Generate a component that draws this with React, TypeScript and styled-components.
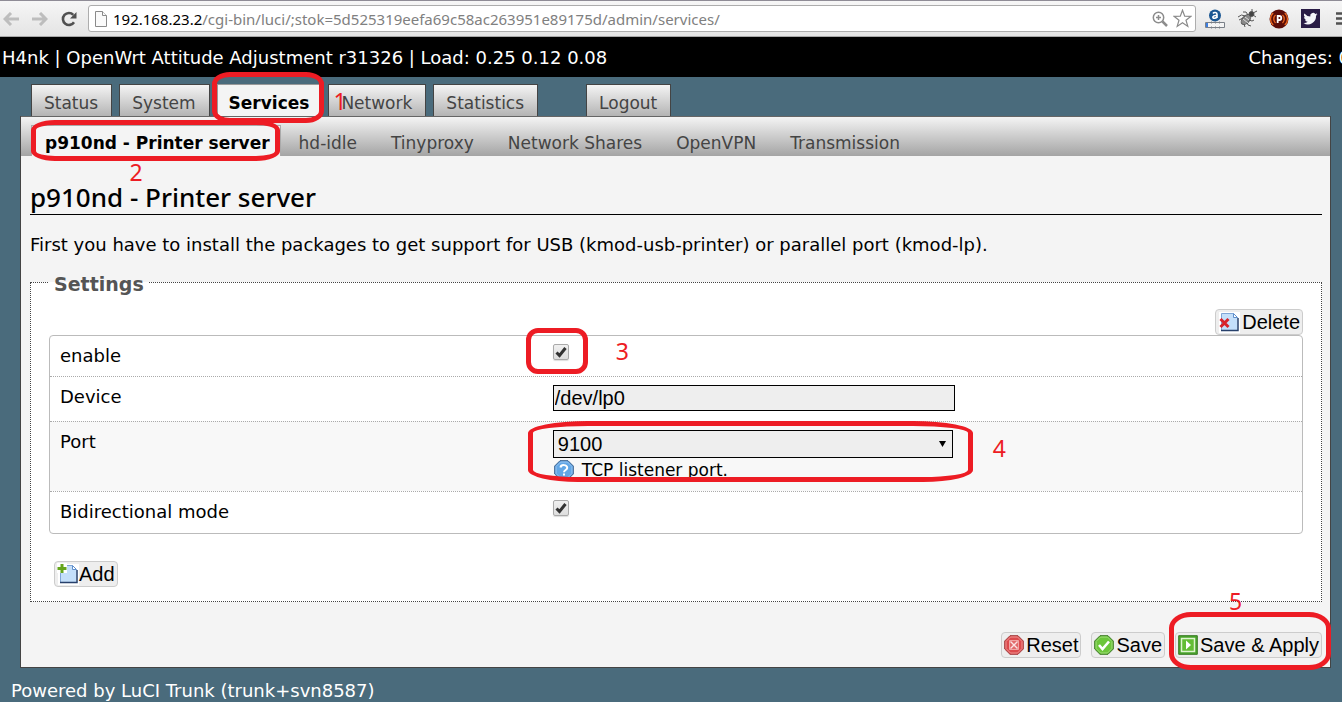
import React from "react";
import styled, { createGlobalStyle, css } from "styled-components";

const ui = `"DejaVu Sans", Verdana, sans-serif`;
const control = `"Liberation Sans", Arial, sans-serif`;
const chrome = `"Noto Sans", "Segoe UI", sans-serif`;
const red = "#ed1c24";

const GlobalStyle = createGlobalStyle`
  *, *::before, *::after { box-sizing: border-box; }
  html, body { margin: 0; min-height: 100%; background: #4a6b7c; overflow-x: hidden; }
  body { font: 17px/20px ${ui}; color: #000; }
  svg { flex: none; }
`;

const Browser = styled.div`
  display: flex;
  align-items: center;
  height: 37px;
  padding-left: 1px;
  background: linear-gradient(#f6f6f6, #e4e4e4);
  border-top: 1px solid #8f8c96;
  border-bottom: 1px solid #a8a8a8;
  overflow: hidden;
`;

const ToolButton = styled.button`
  display: flex;
  flex: none;
  align-items: center;
  justify-content: center;
  width: 20px;
  height: 20px;
  margin: 0 9px 0 0;
  padding: 0;
  border: 0;
  background: none;
`;

const Address = styled.div`
  display: flex;
  flex: 1;
  align-items: center;
  gap: 5px;
  min-width: 0;
  height: 27px;
  padding: 0 3px 0 6px;
  background: #fff;
  border: 1px solid #adadad;
  border-radius: 3px;
`;

const Url = styled.span`
  flex: 1;
  padding-left: 1px;
  font: 15px/20px ${chrome};
  color: #808080;
  white-space: nowrap;
  overflow: hidden;
`;

const Host = styled.span`
  color: #000;
`;

const Extensions = styled.div`
  display: flex;
  flex: none;
  align-items: center;
  gap: 12px;
  width: 146px;
  padding-left: 9px;
  overflow: hidden;
`;

const Header = styled.header`
  display: flex;
  justify-content: space-between;
  align-items: center;
  height: 40px;
  padding: 2px 0 0 2px;
  background: #000;
  color: #fff;
  font-size: 18px;
  white-space: nowrap;
  overflow: hidden;
`;

const Changes = styled.span`
  flex: none;
  margin-right: -8px;
`;

const Tabs = styled.nav`
  display: flex;
  gap: 7px;
  padding: 7px 31px 0;
`;

const tabLabel = css`
  color: #444;
  text-decoration: none;
  white-space: nowrap;
`;

const Tab = styled.a<{ $active?: boolean; $apart?: boolean }>`
  ${tabLabel}
  position: relative;
  height: 32px;
  margin-left: ${(p) => (p.$apart ? "41px" : "0")};
  padding: 8px 13px 0 12px;
  border: 1px solid #444;
  border-bottom: 0;
  background: linear-gradient(#f4f4f4, #b4b4b4);
  ${(p) =>
    p.$active &&
    css`
      padding: 8px 11px 0;
      background: #f4f4f4;
      color: #000;
      font-weight: bold;
      border-color: #999;
    `}
`;

const Panel = styled.main`
  margin: 0 11px 0 20px;
  background: #f4f4f4;
  border: 1px solid #444;
  border-top: 0;
`;

const SubTabs = styled.nav`
  display: flex;
  align-items: flex-end;
  gap: 2px;
  height: 40px;
  padding-left: 10px;
  border-top: 1px solid #666;
  background: linear-gradient(#f4f4f4, #a4a4a4);
`;

const SubTab = styled.a<{ $active?: boolean }>`
  ${tabLabel}
  position: relative;
  height: 31px;
  padding: 8px 16px 0;
  ${(p) =>
    p.$active &&
    css`
      padding: 7px 10px 0 13px;
      background: #f4f4f4;
      border: 1px solid #aaa;
      border-bottom: 0;
      color: #000;
      font-weight: bold;
    `}
`;

const Content = styled.form`
  margin: 0;
  padding: 26px 8px 9px 9px;
`;

const Title = styled.h1`
  margin: 0;
  padding-bottom: 2px;
  border-bottom: 1px solid #000;
  font: 500 26px/30px "Noto Sans", "Trebuchet MS", sans-serif;
`;

const Intro = styled.p`
  margin: 20px 0 14px;
  font-size: 18px;
`;

const Settings = styled.fieldset`
  min-width: 0;
  margin: 0;
  padding: 14px 18px 14px;
  border: 1px dotted #444;
  background: #fff;
`;

const Legend = styled.legend`
  padding: 4px 5px 0;
  font-size: 19px;
  line-height: 22px;
  font-weight: bold;
  color: #555;
`;

const Actions = styled.div<{ $end?: boolean; $top?: number }>`
  display: flex;
  gap: 10px;
  margin-top: ${(p) => p.$top ?? 0}px;
  justify-content: ${(p) => (p.$end ? "flex-end" : "flex-start")};
`;

const Button = styled.button`
  position: relative;
  display: flex;
  align-items: center;
  gap: 2px;
  height: 26px;
  padding: 0 2px;
  border: 1px solid #ccc;
  border-radius: 4px;
  background: #eee;
  font: 20px/24px ${control};
  color: #000;
  white-space: nowrap;
`;

const AddButton = styled(Button)`
  gap: 0;
  margin-left: 5px;
`;

const Rows = styled.div`
  border: 1px solid #bbb;
  border-radius: 4px;
`;

const Row = styled.div<{ $height: number; $shaded?: boolean }>`
  display: grid;
  grid-template-columns: 40% 1fr;
  align-items: start;
  min-height: ${(p) => p.$height}px;
  padding-top: 8px;
  background: ${(p) => (p.$shaded ? "#f8f8f8" : "transparent")};
  & + & {
    border-top: 1px dotted #aaa;
  }
`;

const Label = styled.label`
  padding: 2px 0 0 10px;
  font-size: 18px;
`;

const Field = styled.div`
  position: relative;
  justify-self: start;
  padding-left: 2px;
`;

const TextBox = styled.input`
  display: block;
  width: 402px;
  height: 26px;
  margin: 0;
  padding: 0 1px;
  border: 1px solid #000;
  border-radius: 0;
  background: #eee;
  font: 20px/24px ${control};
  color: #000;
`;

const SelectWrap = styled.div`
  position: relative;
  width: 400px;
  & > svg {
    position: absolute;
    top: 11px;
    right: 7px;
    pointer-events: none;
  }
`;

const Select = styled.select`
  display: block;
  appearance: none;
  width: 100%;
  height: 28px;
  padding: 0 4px;
  border: 1px solid #000;
  border-radius: 0;
  background: #eee;
  font: 20px/26px ${control};
  color: #000;
`;

const Hint = styled.div`
  display: flex;
  align-items: center;
  gap: 8px;
  height: 24px;
  padding-left: 1px;
  font-size: 17px;
`;

const CheckWrap = styled.span`
  position: relative;
  display: block;
  width: 16px;
  height: 16px;
  & > svg {
    position: absolute;
    inset: 0;
    pointer-events: none;
  }
`;

const CheckInput = styled.input`
  appearance: none;
  display: block;
  width: 16px;
  height: 16px;
  margin: 0;
  border: 1px solid #aaa;
  border-radius: 2px;
  background: linear-gradient(#f0f0f0, #dedede);
  box-shadow: 0 1px 1px #ddd;
`;

const Ring = styled.span<{ $inset: string; $radius: string }>`
  position: absolute;
  z-index: 2;
  inset: ${(p) => p.$inset};
  border: 5px solid ${red};
  border-radius: ${(p) => p.$radius};
  pointer-events: none;
`;

const Mark = styled.span<{ $x: number; $y: number }>`
  position: absolute;
  z-index: 2;
  left: calc(100% + ${(p) => p.$x}px);
  top: ${(p) => p.$y}px;
  font: 23px/24px ${chrome};
  color: ${red};
  pointer-events: none;
`;

const Footer = styled.footer`
  padding: 13px 11px 2px;
  color: #fff;
  font-size: 18px;
  line-height: 19px;
`;

const Arrow = ({ back }: { back?: boolean }) => (
  <svg width="16" height="14" viewBox="0 0 16 14" fill="none" stroke="#bdbdbd" strokeWidth="3">
    {back ? <path d="M8 1 2 7l6 6M2.500 7H16" /> : <path d="m8 1 6 6-6 6M13.500 7H0" />}
  </svg>
);

const Reload = () => (
  <svg width="16" height="16" viewBox="0 0 16 16" fill="none">
    <path d="M13 11.200A6 6 0 1 1 12.300 3.800" stroke="#505050" strokeWidth="2.600" />
    <path d="M15.500 1v6.500H9z" fill="#505050" />
  </svg>
);

const PageIcon = () => (
  <svg width="12" height="16" viewBox="0 0 12 16" fill="#fafafa" stroke="#8a8a8a">
    <path d="M.5.500h7l4 4v11H.5z" />
    <path d="M7.500.500v4h4" />
  </svg>
);

const ZoomIcon = () => (
  <svg width="16" height="16" viewBox="0 0 16 16" fill="none" stroke="#8c8c8c" strokeWidth="1.500">
    <circle cx="6.500" cy="6.500" r="5.200" />
    <path d="M4 6.500h5M6.500 4v5" />
    <path d="m10.500 10.500 4.500 4.500" strokeWidth="2.500" />
  </svg>
);

const Star = () => (
  <svg width="19" height="19" viewBox="0 0 19 19" fill="#fff" stroke="#8a8a8a" strokeWidth="1.200">
    <path d="m9.500 1.200 2.200 5.900 6.300.200-5 3.900 1.800 6.200-5.300-3.600-5.300 3.600L6 11.200 1 7.300l6.300-.2z" />
  </svg>
);

const RankIcon = () => (
  <svg width="20" height="20" viewBox="0 0 20 20">
    <circle cx="10" cy="6.500" r="6" fill="#1a5793" />
    <path d="M8 4.500c1-1.500 4-1.200 4 .7V9M12 6.500c-5-.5-5 3-2.500 2.700 1.500-.2 2.500-1 2.500-2" fill="none" stroke="#fff" strokeWidth="1.600" />
    <path d="M.5 13.500h19v5H.5z" fill="#f4f4f4" stroke="#7a8088" />
    <path d="M1 14h2v4H1z" fill="#3c7ee0" />
    <path d="M6.500 12.500v2m4-2v2m4-2v2m-8 3v2m4-2v2m4-2v2" stroke="#7a8088" />
  </svg>
);

const BugIcon = () => (
  <svg width="20" height="20" viewBox="0 0 20 20" stroke="#555" fill="none">
    <ellipse cx="9" cy="10.500" rx="3.500" ry="6" transform="rotate(42 9 10.500)" fill="#888" />
    <circle cx="14.500" cy="5" r="2.500" fill="#444" />
    <path d="M8 7 4.500 6 1 8M6 9 2 11M12 11l3 1 2-1M10 13l1 3 3 1M7 15l1 3M11 6 9 3 6 3M15 3V0m1 4 4-2M16 6l3 2" />
    <path d="m6 10 5 4M8 8l4 3" stroke="#ddd" />
  </svg>
);

const RadioIcon = () => (
  <svg width="20" height="20" viewBox="0 0 20 20" fill="none">
    <circle cx="10" cy="10" r="9.500" fill="#5c0d08" />
    <path d="M6.500 6a5.500 5.500 0 0 0 0 8m7-8a5.500 5.500 0 0 1 0 8M4.200 4a8 8 0 0 0 0 12M15.800 4a8 8 0 0 1 0 12" stroke="#ee6a20" strokeWidth="1.300" />
    <path d="M8.700 14V7h1.600a2 2 0 0 1 0 4H9" stroke="#fff" strokeWidth="1.800" />
  </svg>
);

const BirdIcon = () => (
  <svg width="19" height="19" viewBox="0 0 19 19">
    <path d="M0 0h19v19H0z" fill="#2a1c46" />
    <path
      d="M16.500 5.300c-.5.300-1 .4-1.600.5.600-.4 1-.9 1.200-1.600-.6.300-1.200.6-1.800.7a2.900 2.900 0 0 0-5 2.600A8 8 0 0 1 3.400 4.500a2.900 2.900 0 0 0 .9 3.800c-.5 0-.9-.1-1.300-.4 0 1.400 1 2.600 2.300 2.900-.4.100-.9.100-1.300 0 .4 1.200 1.400 2 2.700 2A5.800 5.800 0 0 1 2.500 14a8 8 0 0 0 12.500-7.200c.6-.4 1.100-.9 1.500-1.500z"
      fill="#f5f5fa"
    />
  </svg>
);

const MenuIcon = () => (
  <svg width="22" height="14" viewBox="0 0 22 14">
    <path d="M4 1.500h18M4 6.500h18M4 11.500h18" stroke="#505050" strokeWidth="2.500" />
  </svg>
);

const Sheet = () => (
  <>
    <path d="M3.500 2.500h12l4 4v13h-16z" fill="#c4dffa" />
    <path d="M3.500 20V2.500h12" fill="none" stroke="#7fa5d6" />
    <path d="M3 19.500h17V7" fill="none" stroke="#27406b" strokeWidth="1.500" />
    <path d="M15.500 2.500v4h4z" fill="#fff" stroke="#5f8fcc" />
  </>
);

const DeleteIcon = () => (
  <svg width="22" height="22" viewBox="0 0 22 22">
    <path d="M1 1h21v21H1z" fill="#fff" />
    <Sheet />
    <path d="m2.500 8 8 8m0-8-8 8" stroke="#d8232a" strokeWidth="3" />
  </svg>
);

const AddIcon = () => (
  <svg width="22" height="22" viewBox="0 0 22 22">
    <path d="M1 1h21v21H1z" fill="#fff" />
    <Sheet />
    <path d="M0 0h10v10H0z" fill="#fff" />
    <path d="M5 1v9M.5 5.500h9" stroke="#65a51c" strokeWidth="3" />
  </svg>
);

const ResetIcon = () => (
  <svg width="20" height="20" viewBox="0 0 20 20">
    <path d="M6 .7h8L19.300 6v8L14 19.300H6L.7 14V6z" fill="#dc4a4d" stroke="#a13a3c" />
    <path d="M6.500 2h7L18 6.500v7L13.500 18h-7L2 13.500v-7z" fill="none" stroke="#ee9493" />
    <path d="M5.500 5.500h9v9h-9z" fill="#e26b6b" stroke="#f0a5a3" />
    <path d="m6.500 6.500 7 7m0-7-7 7" stroke="#fbe4e4" strokeWidth="1.400" />
  </svg>
);

const SaveIcon = () => (
  <svg width="20" height="20" viewBox="0 0 20 20">
    <path d="M6 .7h8L19.300 6v8L14 19.300H6L.7 14V6z" fill="#58b52b" stroke="#3e7a26" />
    <path d="M6.500 2h7L18 6.500v7L13.500 18h-7L2 13.500v-7z" fill="#6cc63b" stroke="#a3df7e" />
    <path d="m5 10 3.500 4L15 6.500" fill="none" stroke="#fff" strokeWidth="2.600" />
  </svg>
);

const ApplyIcon = () => (
  <svg width="20" height="20" viewBox="0 0 20 20">
    <path d="M.7.700h18.600v18.600H.7z" fill="#4aa52c" stroke="#397b24" />
    <path d="M3.500 3.500h13v13h-13z" fill="#63bd35" stroke="#dff5d0" strokeWidth="1.500" />
    <path d="M8 5.500v9l5-4.500z" fill="#fff" />
  </svg>
);

const HelpIcon = () => (
  <svg width="20" height="20" viewBox="0 0 20 20">
    <path d="M6 .7h8L19.300 6v8L14 19.300H6L.7 14V6z" fill="#4f93d8" stroke="#37618f" />
    <path d="M6.500 2h7L18 6.500v7L13.500 18h-7L2 13.500v-7z" fill="#62a7e6" stroke="#9cc8f2" />
    <path d="M6.500 7.500C7 4 13.500 4.500 13.200 8c-.2 2-3.200 2-3.200 4.200" fill="none" stroke="#fff" strokeWidth="2" />
    <path d="M9 13.500h2v2H9z" fill="#fff" />
  </svg>
);

const Check = ({ id }: { id: string }) => (
  <CheckWrap>
    <CheckInput id={id} type="checkbox" defaultChecked />
    <svg width="16" height="16" viewBox="0 0 16 16">
      <path d="m3.500 8.500 3 3L12.500 4" fill="none" stroke="#333" strokeWidth="3" />
    </svg>
  </CheckWrap>
);

export default function App() {
  return (
    <>
      <GlobalStyle />
      <Browser>
        <ToolButton aria-label="Back"><Arrow back /></ToolButton>
        <ToolButton aria-label="Forward"><Arrow /></ToolButton>
        <ToolButton aria-label="Reload"><Reload /></ToolButton>
        <Address>
          <PageIcon />
          <Url>
            <Host>192.168.23.2</Host>/cgi-bin/luci/;stok=5d525319eefa69c58ac263951e89175d/admin/services/
          </Url>
          <ZoomIcon />
          <Star />
        </Address>
        <Extensions>
          <RankIcon />
          <BugIcon />
          <RadioIcon />
          <BirdIcon />
          <MenuIcon />
        </Extensions>
      </Browser>
      <Header>
        <span>H4nk | OpenWrt Attitude Adjustment r31326 | Load: 0.25 0.12 0.08</span>
        <Changes>Changes: 0</Changes>
      </Header>
      <Tabs>
        <Tab href="#status">Status</Tab>
        <Tab href="#system">System</Tab>
        <Tab href="#services" $active>
          Services
          <Ring $inset="-13px -4px -7px -6px" $radius="18px / 12px" />
          <Mark $x={13} $y={4}>1</Mark>
        </Tab>
        <Tab href="#network">Network</Tab>
        <Tab href="#statistics">Statistics</Tab>
        <Tab href="#logout" $apart>Logout</Tab>
      </Tabs>
      <Panel>
        <SubTabs>
          <SubTab href="#p910nd" $active>
            p910nd - Printer server
            <Ring $inset="-6px 0 -5px -1px" $radius="24px / 10px" />
            <Mark $x={-150} $y={34}>2</Mark>
          </SubTab>
          <SubTab href="#hd-idle">hd-idle</SubTab>
          <SubTab href="#tinyproxy">Tinyproxy</SubTab>
          <SubTab href="#shares">Network Shares</SubTab>
          <SubTab href="#openvpn">OpenVPN</SubTab>
          <SubTab href="#transmission">Transmission</SubTab>
        </SubTabs>
        <Content onSubmit={(e) => e.preventDefault()}>
          <Title>p910nd - Printer server</Title>
          <Intro>
            First you have to install the packages to get support for USB (kmod-usb-printer) or parallel port (kmod-lp).
          </Intro>
          <Settings>
            <Legend>Settings</Legend>
            <Actions $end>
              <Button type="button"><DeleteIcon />Delete</Button>
            </Actions>
            <Rows>
              <Row $height={40}>
                <Label htmlFor="enable">enable</Label>
                <Field>
                  <Check id="enable" />
                  <Ring $inset="-16px -19px -14px -25px" $radius="12px" />
                  <Mark $x={47} $y={-5}>3</Mark>
                </Field>
              </Row>
              <Row $height={45}>
                <Label htmlFor="device">Device</Label>
                <Field>
                  <TextBox id="device" defaultValue="/dev/lp0" />
                </Field>
              </Row>
              <Row $height={70} $shaded>
                <Label htmlFor="port">Port</Label>
                <Field>
                  <SelectWrap>
                    <Select id="port" defaultValue="9100">
                      <option>9100</option>
                    </Select>
                    <svg width="7" height="6" viewBox="0 0 7 6"><path d="M0 0h7L3.500 6z" /></svg>
                  </SelectWrap>
                  <Hint><HelpIcon />TCP listener port.</Hint>
                  <Ring $inset="-9px -20px 0 -23px" $radius="60px 60px 50px 50px / 12px" />
                  <Mark $x={40} $y={6}>4</Mark>
                </Field>
              </Row>
              <Row $height={42}>
                <Label htmlFor="bidirectional">Bidirectional mode</Label>
                <Field>
                  <Check id="bidirectional" />
                </Field>
              </Row>
            </Rows>
            <Actions $top={27}>
              <AddButton type="button"><AddIcon />Add</AddButton>
            </Actions>
          </Settings>
          <Actions $end $top={30}>
            <Button type="reset"><ResetIcon />Reset</Button>
            <Button type="button"><SaveIcon />Save</Button>
            <Button type="submit">
              <ApplyIcon />Save &amp; Apply
              <Ring $inset="-21px -10px -13px -7px" $radius="22px / 16px" />
              <Mark $x={-92} $y={-44}>5</Mark>
            </Button>
          </Actions>
        </Content>
      </Panel>
      <Footer>Powered by LuCI Trunk (trunk+svn8587)</Footer>
    </>
  );
}
